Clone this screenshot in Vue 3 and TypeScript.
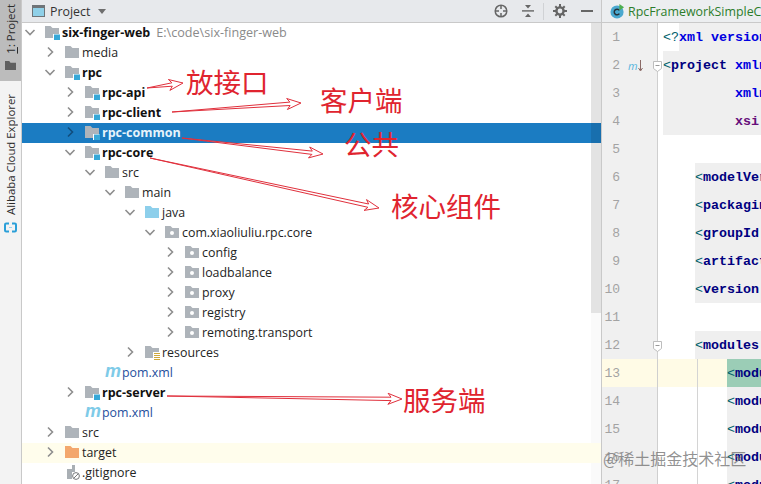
<script setup lang="ts">
type Kind = 'module' | 'plain' | 'source' | 'package' | 'resources' | 'target' | 'maven' | 'ignore'
interface Row {
  depth: number
  open?: boolean
  leaf?: boolean
  kind: Kind
  label: string
  hint?: string
  bold?: boolean
  selected?: boolean
  marked?: boolean
}
const rows: Row[] = [
  { depth: 0, open: true, kind: 'module', label: 'six-finger-web', hint: 'E:\\code\\six-finger-web', bold: true },
  { depth: 1, kind: 'plain', label: 'media' },
  { depth: 1, open: true, kind: 'module', label: 'rpc', bold: true },
  { depth: 2, kind: 'module', label: 'rpc-api', bold: true },
  { depth: 2, kind: 'module', label: 'rpc-client', bold: true },
  { depth: 2, kind: 'module', label: 'rpc-common', bold: true, selected: true },
  { depth: 2, open: true, kind: 'module', label: 'rpc-core', bold: true },
  { depth: 3, open: true, kind: 'plain', label: 'src' },
  { depth: 4, open: true, kind: 'plain', label: 'main' },
  { depth: 5, open: true, kind: 'source', label: 'java' },
  { depth: 6, open: true, kind: 'package', label: 'com.xiaoliuliu.rpc.core' },
  { depth: 7, kind: 'package', label: 'config' },
  { depth: 7, kind: 'package', label: 'loadbalance' },
  { depth: 7, kind: 'package', label: 'proxy' },
  { depth: 7, kind: 'package', label: 'registry' },
  { depth: 7, kind: 'package', label: 'remoting.transport' },
  { depth: 5, kind: 'resources', label: 'resources' },
  { depth: 3, leaf: true, kind: 'maven', label: 'pom.xml' },
  { depth: 2, kind: 'module', label: 'rpc-server', bold: true },
  { depth: 2, leaf: true, kind: 'maven', label: 'pom.xml' },
  { depth: 1, kind: 'plain', label: 'src' },
  { depth: 1, kind: 'target', label: 'target', marked: true },
  { depth: 1, leaf: true, kind: 'ignore', label: '.gitignore' },
]

interface Line {
  n: number
  indent: number
  bracket?: string
  lead?: string
  tag?: string
  attr?: string
  purple?: string
  blank?: boolean
  fold?: boolean
  state?: 'current'
  guide?: boolean
  maven?: boolean
}
const lines: Line[] = [
  { n: 1, indent: 5, lead: '<?', attr: 'xml version' },
  { n: 2, indent: 5, bracket: '<', tag: 'project', attr: ' xmlns', fold: true, maven: true },
  { n: 3, indent: 5, attr: '         xmlns' },
  { n: 4, indent: 5, purple: '         xsi' },
  { n: 5, indent: 5, blank: true },
  { n: 6, indent: 37, bracket: '<', tag: 'modelVersion' },
  { n: 7, indent: 37, bracket: '<', tag: 'packaging' },
  { n: 8, indent: 37, bracket: '<', tag: 'groupId' },
  { n: 9, indent: 37, bracket: '<', tag: 'artifactId' },
  { n: 10, indent: 37, bracket: '<', tag: 'version' },
  { n: 11, indent: 37, blank: true },
  { n: 12, indent: 37, bracket: '<', tag: 'modules', fold: true },
  { n: 13, indent: 69, bracket: '<', tag: 'module', state: 'current', guide: true },
  { n: 14, indent: 69, bracket: '<', tag: 'module', guide: true },
  { n: 15, indent: 69, bracket: '<', tag: 'module', guide: true },
  { n: 16, indent: 69, bracket: '<', tag: 'module', guide: true },
  { n: 17, indent: 69, bracket: '<', tag: 'module', guide: true },
]

function arrow(x1: number, y1: number, x2: number, y2: number): string {
  const len = Math.hypot(x2 - x1, y2 - y1)
  const ux = (x2 - x1) / len
  const uy = (y2 - y1) / len
  const nx = -uy
  const ny = ux
  const at = (along: number, side: number) =>
    `${(x2 - ux * along + nx * side).toFixed(1)},${(y2 - uy * along + ny * side).toFixed(1)}`
  return [
    `${x1},${y1}`,
    at(11, -1.7),
    at(14, -5.5),
    at(0, 0),
    at(14, 5.5),
    at(11, 1.7),
  ].join(' ')
}
const arrows = [
  arrow(147, 88, 183, 83),
  arrow(172, 112, 301, 103),
  arrow(182, 138, 323, 154),
  arrow(150, 158, 379, 208),
  arrow(167, 396, 402, 399),
]
const notes = [
  { text: '放接口', cls: 'n1' },
  { text: '客户端', cls: 'n2' },
  { text: '公共', cls: 'n3' },
  { text: '核心组件', cls: 'n4' },
  { text: '服务端', cls: 'n5' },
]
</script>

<template>
  <div class="ide">
    <aside class="rail">
      <div class="rail-tab">
        <span class="vert"><u>1</u>: Project</span>
        <svg width="11" height="9" viewBox="0 0 13 10" preserveAspectRatio="none"><path d="M0 0h5l1.5 2H13v8H0z" fill="#5f5f5f" /></svg>
      </div>
      <div class="rail-second">
        <span class="vert">Alibaba Cloud Explorer</span>
        <svg width="13" height="11" viewBox="0 0 13 11" fill="none" stroke="#2a9fd8" stroke-width="2">
          <path d="M5 1.5H2.2A1.2 1.2 0 0 0 1 2.7v5.6a1.2 1.2 0 0 0 1.2 1.2H5" />
          <path d="M8 1.5h2.8A1.2 1.2 0 0 1 12 2.7v5.6a1.2 1.2 0 0 1-1.2 1.2H8" />
          <path d="M5 5.5h3" stroke-width="1" stroke="#9bd3ee" />
        </svg>
      </div>
    </aside>

    <section class="project">
      <header class="toolbar">
        <svg class="win" width="13" height="12" viewBox="0 0 13 12">
          <rect x=".5" y=".5" width="12" height="11" fill="#8fd0e8" stroke="#6e7478" />
          <rect x="1" y="1" width="11" height="2" fill="#6e7478" />
        </svg>
        <span class="title">Project</span>
        <svg class="drop" width="8" height="5" viewBox="0 0 8 5"><path d="M0 0h8L4 5z" fill="#6e6e6e" /></svg>
        <span class="grow"></span>
        <svg class="tool t-target" width="14" height="14" viewBox="0 0 14 14" fill="none" stroke="#666" stroke-width="1.5">
          <circle cx="7" cy="7" r="5.8" />
          <path d="M7 1v4M7 9v4M1 7h4M9 7h4" />
        </svg>
        <svg class="tool t-collapse" width="12" height="14" viewBox="0 0 12 14">
          <path d="M0 6.2h12v1.4H0z" fill="#666" />
          <path d="M3 1h6L6 4.6zM3 13h6L6 9.4z" fill="#666" />
        </svg>
        <span class="sep"></span>
        <svg class="tool t-gear" width="14" height="14" viewBox="0 0 14 14">
          <circle cx="7" cy="7" r="3.6" fill="none" stroke="#666" stroke-width="2.4" />
          <path d="M6 0h2v3H6zM6 11h2v3H6zM0 6h3v2H0zM11 6h3v2h-3zM1.6 3 3 1.6l2 2L3.600 5zM9 10.400 10.400 9l2 2-1.400 1.400zM1.600 11l2-2L5 10.400l-2 2zM9 3.600l2-2L12.400 3l-2 2z" fill="#666" />
        </svg>
        <span class="minus"></span>
      </header>

      <div class="tree-wrap">
        <ul class="tree">
          <li
            v-for="(row, i) in rows"
            :key="i"
            class="row"
            :class="{ selected: row.selected, marked: row.marked }"
            :style="{ paddingLeft: 2 + 20 * row.depth + 'px' }"
          >
            <svg v-if="!row.leaf" class="chev" width="12" height="12" viewBox="0 0 12 12" fill="none" stroke-width="1.6">
              <path v-if="row.open" d="M1.500 4 6 8.500 10.500 4" />
              <path v-else d="M4 1.500 8.500 6 4 10.500" />
            </svg>
            <span v-else class="chev-space"></span>

            <span v-if="row.kind === 'maven'" class="m-icon">m</span>
            <svg v-else-if="row.kind === 'ignore'" class="icon ig" width="15" height="15" viewBox="0 0 15 15">
              <path d="M1 4h5V0h3v7H6v7H1z" fill="#a9afb4" />
              <circle cx="10" cy="11" r="3.400" fill="#fff" stroke="#77797b" stroke-width="1" />
              <path d="m7.800 13.200 4.400-4.400" stroke="#77797b" />
            </svg>
            <svg v-else class="icon" width="15" height="15" viewBox="0 0 15 15">
              <path
                d="M0 1h5.500l2 2H14v10H0z"
                :fill="row.kind === 'source' ? '#8dcfeb' : row.kind === 'target' ? '#f3a76d' : '#aeb4ba'"
              />
              <circle v-if="row.kind === 'package'" cx="7" cy="8" r="2" fill="#fff" />
              <rect v-if="row.kind === 'module'" x="8" y="9" width="6.500" height="6" fill="#fff" />
              <rect v-if="row.kind === 'module'" x="9" y="9.500" width="6" height="5.500" fill="#37a8d8" />
              <template v-if="row.kind === 'resources'">
                <rect x="8" y="7" width="7" height="8" fill="#fff" />
                <path d="M9 8.500h6M9 10.500h6M9 12.500h6M9 14.500h6" stroke="#cfa83a" stroke-width="1" />
              </template>
            </svg>

            <span class="label" :class="{ bold: row.bold, pom: row.kind === 'maven' }">{{ row.label }}</span>
            <span v-if="row.hint" class="hint">{{ row.hint }}</span>
          </li>
        </ul>
        <div class="scroll"><div class="thumb"></div></div>
      </div>
    </section>

    <section class="editor">
      <header class="tabbar">
        <svg class="tab-icon" width="15" height="15" viewBox="0 0 16 16">
          <circle cx="7.500" cy="8.500" r="7" fill="#4aa8cf" />
          <path d="M10 6.800A3 3 0 1 0 10 10.200" fill="none" stroke="#26323a" stroke-width="1.600" />
          <path d="M10 0v7l5-3.500z" fill="#4dae50" />
        </svg>
        <span class="tab-name">RpcFrameworkSimpleC</span>
      </header>
      <div class="code">
        <div v-for="line in lines" :key="line.n" class="line">
          <div class="gutter" :class="{ current: line.state === 'current' }">
            <span class="num">{{ line.n }}</span>
            <span v-if="line.maven" class="gutter-m">m<svg width="5" height="12" viewBox="0 0 5 12"><path d="M2.500 0v10M.5 8l2 3 2-3" fill="none" stroke="#8a6a66" stroke-width="1" /></svg></span>
            <svg v-if="line.fold" class="fold" width="9" height="11" viewBox="0 0 9 11">
              <path d="M.5.500h8v7l-4 3-4-3z" fill="#fff" stroke="#bdbdbd" />
              <path d="M2.500 4.500h4" stroke="#999" />
            </svg>
          </div>
          <div class="body" :class="{ current: line.state === 'current', guided: line.guide }">
            <span class="indent" :style="{ width: line.indent + 'px' }"></span>
            <span v-if="line.lead" class="lead">{{ line.lead }}</span>
            <span v-if="!line.blank" class="block" :class="{ matched: line.state === 'current' }"><span class="br">{{ line.bracket }}</span><span class="tag">{{ line.tag }}</span><span class="attr">{{ line.attr }}</span><span class="purple">{{ line.purple }}</span></span>
          </div>
        </div>
      </div>
    </section>

    <svg class="marks" width="761" height="484" viewBox="0 0 761 484">
      <polygon
        v-for="(pts, i) in arrows"
        :key="i"
        :points="pts"
        fill="#fff"
        stroke="#e0303c"
        stroke-width="1"
        stroke-linejoin="miter"
      />
    </svg>
    <span v-for="note in notes" :key="note.cls" class="note" :class="note.cls">{{ note.text }}</span>
    <span class="watermark">@稀土掘金技术社区</span>
  </div>
</template>

<style>
html, body { margin: 0; overflow: hidden; background: #fff; }
</style>

<style scoped>
.ide {
  position: relative;
  display: flex;
  width: 761px;
  height: 484px;
  overflow: hidden;
  font-family: "Open Sans", "Noto Sans", sans-serif;
  font-size: 12.400px;
  color: #222;
  background: #fff;
}
.rail {
  flex: none;
  width: 22px;
  box-sizing: border-box;
  border-right: 1px solid #c9c9c9;
  background: #f3f3f3;
  display: flex;
  flex-direction: column;
}
.rail-tab {
  height: 81px;
  padding-top: 4px;
  box-sizing: border-box;
  background: #bcbcbc;
  display: flex;
  flex-direction: column;
  align-items: center;
  gap: 7px;
}
.rail-second {
  padding-top: 13px;
  display: flex;
  flex-direction: column;
  align-items: center;
  gap: 7px;
}
.vert {
  writing-mode: vertical-rl;
  transform: rotate(180deg);
  font-size: 11.400px;
  line-height: 22px;
  white-space: nowrap;
  color: #2b2b2b;
}
.project {
  flex: none;
  width: 579px;
  display: flex;
  flex-direction: column;
}
.toolbar {
  flex: none;
  height: 22px;
  border-bottom: 1px solid #c9c9c9;
  background: #e7e9ec;
  display: flex;
  align-items: center;
  padding: 0 8px 0 10px;
}
.win { margin-right: 5px; }
.title { font-size: 12.400px; color: #333; }
.drop { margin-left: 8px; }
.grow { flex: 1; }
.tool { flex: none; }
.t-target { margin-right: 14px; }
.t-collapse { margin-right: 9px; }
.sep { width: 1px; height: 17px; background: #d0d2d5; margin-right: 9px; }
.t-gear { margin-right: 14px; }
.minus { width: 12px; height: 2px; background: #666; }
.tree-wrap { flex: 1; display: flex; position: relative; min-height: 0; }
.tree {
  flex: 1;
  margin: 0;
  padding: 0;
  list-style: none;
  min-width: 0;
}
.row {
  height: 20px;
  box-sizing: border-box;
  padding-bottom: 2px;
  display: flex;
  align-items: center;
  white-space: nowrap;
  margin-right: -10px;
  position: relative;
  z-index: 1;
}
.row.selected { background: #1b7cc2; }
.row.selected::after {
  content: "";
  position: absolute;
  right: 0;
  top: 0;
  bottom: 0;
  width: 10px;
  background: rgba(0, 0, 0, .1);
}
.row.marked { background: #fffdec; }
.chev { flex: none; stroke: #8e8e8e; margin-right: 9px; }
.row.selected .chev { stroke: #114d7d; }
.chev-space { flex: none; width: 21px; }
.icon { flex: none; margin-right: 2px; }
.icon.ig { margin-left: 1px; margin-right: 1px; }
.m-icon {
  flex: none;
  width: 17px;
  font: italic bold 18px/20px "Liberation Sans", sans-serif;
  color: #7ecbe8;
  transform: translateY(-1px);
}
.label { color: #242424; }
.label.bold { font-weight: 700; color: #111; font-size: 12.500px; }
.label.pom { color: #1f4f9d; }
.row.selected .label { color: #e7f3fb; }
.hint { margin-left: 6px; color: #8a8a8a; font-size: 12.600px; }
.scroll { flex: none; width: 10px; background: #fafafa; }
.thumb { height: 290px; background: #e3e3e3; }
.editor {
  flex: 1;
  min-width: 0;
  border-left: 1px solid #c9c9c9;
  display: flex;
  flex-direction: column;
}
.tabbar {
  flex: none;
  height: 22px;
  border-bottom: 1px solid #c9c9c9;
  background: #eceef0;
  display: flex;
  align-items: center;
  padding-left: 8px;
  gap: 3px;
  overflow: hidden;
}
.tab-icon { flex: none; }
.tab-name { flex: none; color: #2c7d2c; font-size: 12.400px; white-space: nowrap; }
.code { flex: 1; overflow: hidden; }
.line { height: 28px; display: flex; }
.gutter {
  flex: none;
  width: 55px;
  padding-top: 2px;
  border-right: 1px solid #cfcfcf;
  background: #f0f0f0;
  position: relative;
  display: flex;
  align-items: center;
  color: #a3a3a3;
  font: 13px/26px "Liberation Mono", monospace;
}
.gutter.current { background: #fffbe6; }
.num { width: 18px; text-align: right; margin-right: 8px; }
.gutter-m {
  display: flex;
  align-items: center;
  font: italic 11px/12px "Open Sans", sans-serif;
  color: #55b4dd;
}
.fold { position: absolute; right: -5px; top: 10px; }
.body {
  flex: 1;
  min-width: 0;
  display: flex;
  overflow: hidden;
  font: 13.330px/30px "Liberation Mono", monospace;
  white-space: pre;
}
.body.current { background-color: #fffbe6; }
.body.guided {
  background-image: linear-gradient(#d4d4d4, #d4d4d4);
  background-size: 1px 100%;
  background-position: 39px 0;
  background-repeat: no-repeat;
}
.indent { flex: none; }
.lead { color: #00606a; }
.block { flex: 1; background: #efefef; min-width: 0; overflow: hidden; }
.block.matched { background: #9bcdb6; }
.br { color: #00606a; }
.tag { color: #000080; font-weight: 700; }
.attr { color: #0000e0; font-weight: 700; }
.purple { color: #660e7a; font-weight: 700; }
.marks {
  position: absolute;
  left: 0;
  top: 0;
  z-index: 2;
  pointer-events: none;
}
.note {
  position: absolute;
  z-index: 3;
  font-family: "Noto Sans CJK SC", sans-serif;
  font-size: 27.500px;
  line-height: 27px;
  color: #e0242f;
  white-space: nowrap;
}
.n1 { left: 186px; top: 68px; }
.n2 { left: 320px; top: 86px; }
.n3 { left: 344px; top: 130px; }
.n4 { left: 391px; top: 192px; }
.n5 { left: 403px; top: 386px; }
.watermark {
  position: absolute;
  z-index: 3;
  left: 603px;
  top: 448px;
  font-family: "Noto Sans CJK SC", sans-serif;
  font-size: 16px;
  line-height: 20px;
  color: rgba(110, 110, 110, .75);
  white-space: nowrap;
}
</style>
